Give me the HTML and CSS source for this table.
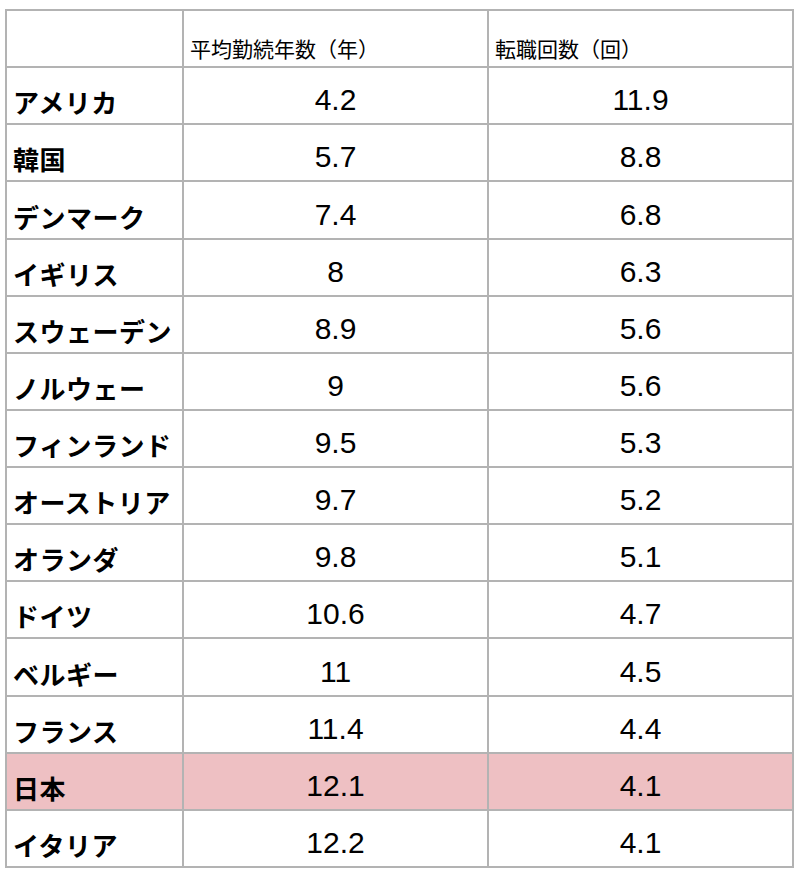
FILE: index.html
```html
<!DOCTYPE html>
<html lang="ja">
<head>
<meta charset="utf-8">
<link rel="stylesheet" href="styles.css">
</head>
<body>
<table class="data">
  <colgroup>
    <col class="c-name">
    <col class="c-val">
    <col class="c-val">
  </colgroup>
  <thead>
    <tr>
      <th class="blank"></th>
      <th class="head">平均勤続年数（年）</th>
      <th class="head">転職回数（回）</th>
    </tr>
  </thead>
  <tbody>
    <tr><td class="name">アメリカ</td><td class="num">4.2</td><td class="num">11.9</td></tr>
    <tr><td class="name">韓国</td><td class="num">5.7</td><td class="num">8.8</td></tr>
    <tr><td class="name">デンマーク</td><td class="num">7.4</td><td class="num">6.8</td></tr>
    <tr><td class="name">イギリス</td><td class="num">8</td><td class="num">6.3</td></tr>
    <tr><td class="name">スウェーデン</td><td class="num">8.9</td><td class="num">5.6</td></tr>
    <tr><td class="name">ノルウェー</td><td class="num">9</td><td class="num">5.6</td></tr>
    <tr><td class="name">フィンランド</td><td class="num">9.5</td><td class="num">5.3</td></tr>
    <tr><td class="name">オーストリア</td><td class="num">9.7</td><td class="num">5.2</td></tr>
    <tr><td class="name">オランダ</td><td class="num">9.8</td><td class="num">5.1</td></tr>
    <tr><td class="name">ドイツ</td><td class="num">10.6</td><td class="num">4.7</td></tr>
    <tr><td class="name">ベルギー</td><td class="num">11</td><td class="num">4.5</td></tr>
    <tr><td class="name">フランス</td><td class="num">11.4</td><td class="num">4.4</td></tr>
    <tr class="highlight"><td class="name">日本</td><td class="num">12.1</td><td class="num">4.1</td></tr>
    <tr><td class="name">イタリア</td><td class="num">12.2</td><td class="num">4.1</td></tr>
  </tbody>
</table>
</body>
</html>
```

FILE: styles.css
```css
html, body {
  margin: 0;
  padding: 0;
  background: #ffffff;
}

body {
  font-family: "Liberation Sans", "Noto Sans CJK JP", sans-serif;
  color: #000000;
}

.data {
  margin: 9px 0 0 5px;
  border-collapse: collapse;
  table-layout: fixed;
  width: 788px;
}

.c-name { width: 177px; }
.c-val { width: 305px; }

.data th,
.data td {
  border: 2px solid #b3b3b3;
  padding: 0 6px 6px 6px;
  vertical-align: bottom;
  box-sizing: border-box;
  height: 57.13px;
}

.head {
  font-family: "Noto Sans CJK JP", sans-serif;
  font-weight: 400;
  font-size: 21px;
  line-height: 24px;
  text-align: left;
  padding-bottom: 4px;
}

.name {
  font-family: "Noto Sans CJK JP", sans-serif;
  font-weight: 700;
  font-size: 26px;
  line-height: 30px;
  letter-spacing: 0.5px;
  text-align: left;
  white-space: nowrap;
  padding-left: 5px;
  padding-bottom: 7px;
}

.num {
  font-family: "Liberation Sans", Arial, sans-serif;
  font-size: 30px;
  line-height: 34px;
  text-align: center;
  padding-bottom: 3px;
}

.highlight td {
  background: #eec0c3;
}
```
